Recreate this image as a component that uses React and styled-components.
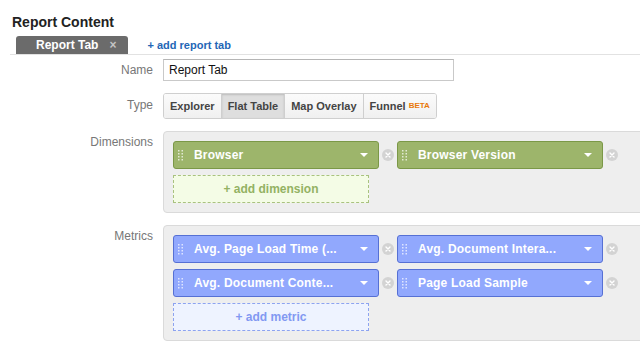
import React from 'react';
import styled, { createGlobalStyle, css } from 'styled-components';

const Global = createGlobalStyle`
  html, body { margin: 0; padding: 0; background: #fff; overflow: hidden; }
  body { font-family: "Liberation Sans", Arial, Helvetica, sans-serif; }
`;

const Page = styled.div`
  width: 640px;
  height: 350px;
  overflow: hidden;
  box-sizing: border-box;
  padding: 14px 0 0 10px;
`;

const Title = styled.h1`
  margin: 0 0 6px 2px;
  font-size: 14px;
  line-height: 16px;
  font-weight: bold;
  color: #222;
`;

const TabBar = styled.div`
  display: flex;
  align-items: flex-end;
  height: 18px;
  padding-left: 6px;
  border-bottom: 1px solid #e2e2e2;
`;

const Tab = styled.div`
  display: flex;
  align-items: center;
  height: 18px;
  box-sizing: border-box;
  padding: 0 12px 0 20px;
  gap: 11px;
  background: #6b6b6b;
  border-radius: 3px 3px 0 0;
  color: #fff;
  font-size: 12px;
  font-weight: bold;
`;

const TabClose = styled.span`
  color: #c4c4c4;
  font-size: 12px;
  font-weight: bold;
`;

const AddTab = styled.a`
  margin-left: 19px;
  align-self: center;
  color: #2466b6;
  font-size: 11px;
  font-weight: bold;
  text-decoration: none;
`;

const Form = styled.div`
  display: grid;
  grid-template-columns: 143px 1fr;
  column-gap: 10px;
  row-gap: 12px;
  margin-top: 4px;
`;

const Label = styled.div`
  text-align: right;
  font-size: 12px;
  line-height: 14px;
  color: #777;
  ${p => p.$top ? css`padding-top: 4px;` : css`align-self: center; padding-bottom: ${p.$shift || 0}px;`}
`;

const Input = styled.input`
  width: 291px;
  height: 22px;
  box-sizing: border-box;
  border: 1px solid #c9c9c9;
  border-top-color: #b5b5b5;
  padding: 0 5px;
  font-family: inherit;
  font-size: 12px;
  color: #111;
  outline: none;
`;

const Segmented = styled.div`
  display: flex;
  align-self: start;
  justify-self: start;
  height: 26px;
  box-sizing: border-box;
  border: 1px solid #cfcfcf;
  border-radius: 3px;
  overflow: hidden;
`;

const SegButton = styled.div`
  display: flex;
  align-items: center;
  padding: 0 6px;
  font-size: 11px;
  font-weight: bold;
  color: #444;
  background: ${p => p.$active ? '#dedede' : 'linear-gradient(#fbfbfb, #f0f0f0)'};
  box-shadow: ${p => p.$active ? 'inset 0 1px 2px rgba(0,0,0,0.15)' : 'none'};
  & + & { border-left: 1px solid #cfcfcf; }
`;

const Beta = styled.sup`
  margin-left: 3px;
  color: #e8790b;
  font-size: 8px;
  font-weight: bold;
  position: relative;
  top: -1px;
`;

const Panel = styled.div`
  width: 500px;
  box-sizing: border-box;
  padding: 9px;
  background: #eeeeee;
  border: 1px solid #dadada;
  border-radius: 4px;
  display: flex;
  flex-direction: column;
  gap: 6px;
`;

const ChipGrid = styled.div`
  display: grid;
  grid-template-columns: repeat(2, auto);
  justify-content: start;
  row-gap: 6px;
`;

const ChipItem = styled.div`
  display: flex;
  align-items: center;
`;

const themes = {
  green: { bg: '#9db56b', border: '#7b9847', addBg: '#f4fce6', addBorder: '#a9c27f', addText: '#93b263' },
  blue: { bg: '#91a8fd', border: '#5670d4', addBg: '#eef3ff', addBorder: '#8da3f0', addText: '#8299f2' },
};

const Chip = styled.div`
  display: flex;
  align-items: center;
  width: 206px;
  height: 28px;
  box-sizing: border-box;
  padding: 0 10px 0 4px;
  background: ${p => themes[p.$tone].bg};
  border: 1px solid ${p => themes[p.$tone].border};
  border-radius: 3px;
  color: #fff;
  font-size: 12px;
  font-weight: bold;
`;

const ChipText = styled.span`
  flex: 1;
  margin-left: 10px;
  white-space: nowrap;
  overflow: hidden;
  letter-spacing: 0.2px;
`;

const Caret = styled.span`
  width: 0;
  height: 0;
  border-left: 4px solid transparent;
  border-right: 4px solid transparent;
  border-top: 4px solid #fff;
`;

const RemoveSlot = styled.div`
  width: 18px;
  display: flex;
  justify-content: center;
`;

const RemoveCircle = styled.div`
  width: 12px;
  height: 12px;
  border-radius: 50%;
  background: #d3d3d3;
  display: flex;
  align-items: center;
  justify-content: center;
`;

const AddButton = styled.div`
  width: 196px;
  height: 28px;
  box-sizing: border-box;
  display: flex;
  align-items: center;
  justify-content: center;
  background: ${p => themes[p.$tone].addBg};
  border: 1px dashed ${p => themes[p.$tone].addBorder};
  color: ${p => themes[p.$tone].addText};
  font-size: 12px;
  font-weight: bold;
`;

const Grip = () => (
  <svg width="6" height="11" viewBox="0 0 6 11">
    {[0, 1].map(c => [0, 1, 2, 3].map(r => (
      <rect key={`${c}-${r}`} x={c * 3.5} y={r * 3} width="1.5" height="1.5" fill="rgba(255,255,255,0.7)" />
    )))}
  </svg>
);

const XIcon = () => (
  <svg width="6" height="6" viewBox="0 0 6 6">
    <path d="M1 1L5 5M5 1L1 5" stroke="#fff" strokeWidth="1.4" strokeLinecap="round" />
  </svg>
);

const ChipWithRemove = ({ tone, children }) => (
  <ChipItem>
    <Chip $tone={tone}>
      <Grip />
      <ChipText>{children}</ChipText>
      <Caret />
    </Chip>
    <RemoveSlot>
      <RemoveCircle><XIcon /></RemoveCircle>
    </RemoveSlot>
  </ChipItem>
);

const FieldPanel = ({ tone, items, addLabel }) => (
  <Panel>
    <ChipGrid>
      {items.map(t => <ChipWithRemove key={t} tone={tone}>{t}</ChipWithRemove>)}
    </ChipGrid>
    <AddButton $tone={tone}>{addLabel}</AddButton>
  </Panel>
);

export default function App() {
  return (
    <>
      <Global />
      <Page>
        <Title>Report Content</Title>
        <TabBar>
          <Tab>Report Tab<TabClose>×</TabClose></Tab>
          <AddTab>+ add report tab</AddTab>
        </TabBar>
        <Form>
          <Label>Name</Label>
          <Input defaultValue="Report Tab" />
          <Label $shift={3}>Type</Label>
          <Segmented>
            <SegButton>Explorer</SegButton>
            <SegButton $active>Flat Table</SegButton>
            <SegButton>Map Overlay</SegButton>
            <SegButton>Funnel<Beta>BETA</Beta></SegButton>
          </Segmented>
          <Label $top>Dimensions</Label>
          <FieldPanel tone="green" items={['Browser', 'Browser Version']} addLabel="+ add dimension" />
          <Label $top>Metrics</Label>
          <FieldPanel
            tone="blue"
            items={['Avg. Page Load Time (...', 'Avg. Document Intera...', 'Avg. Document Conte...', 'Page Load Sample']}
            addLabel="+ add metric"
          />
        </Form>
      </Page>
    </>
  );
}
